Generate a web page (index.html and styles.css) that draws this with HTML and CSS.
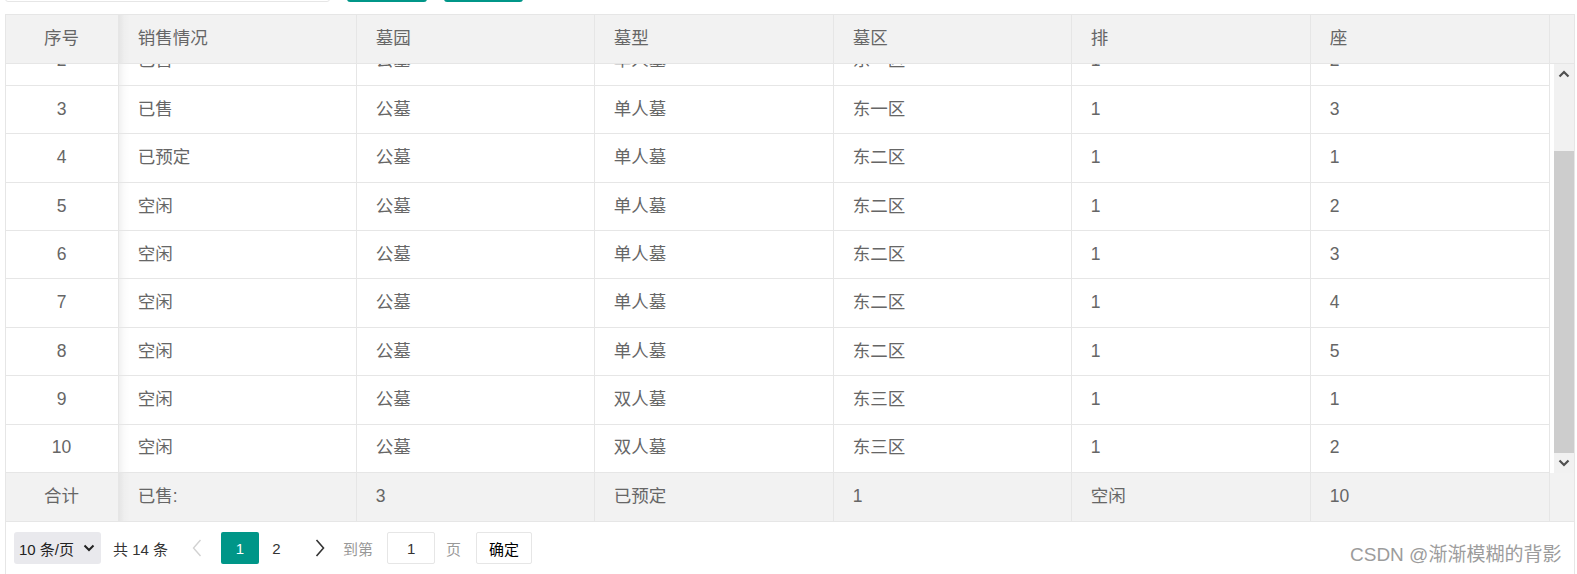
FILE: index.html
```html
<!DOCTYPE html>
<html lang="zh-CN">
<head>
<meta charset="utf-8">
<title>墓位销售</title>
<link rel="stylesheet" href="styles.css">
</head>
<body>
<div class="toolbar">
  <div class="search"></div>
  <div class="btn"></div>
  <div class="btn btn-narrow"></div>
</div>

<div class="table-view">
  <div class="row head">
    <div class="cell center">序号</div>
    <div class="cell shade">销售情况</div>
    <div class="cell">墓园</div>
    <div class="cell">墓型</div>
    <div class="cell">墓区</div>
    <div class="cell">排</div>
    <div class="cell">座</div>
    <div class="gutter"></div>
  </div>

  <div class="body">
    <div class="viewport">
      <div class="rows">
        <div class="row"><div class="cell center">2</div><div class="cell shade">已售</div><div class="cell">公墓</div><div class="cell">单人墓</div><div class="cell">东一区</div><div class="cell">1</div><div class="cell">2</div></div>
        <div class="row"><div class="cell center">3</div><div class="cell shade">已售</div><div class="cell">公墓</div><div class="cell">单人墓</div><div class="cell">东一区</div><div class="cell">1</div><div class="cell">3</div></div>
        <div class="row"><div class="cell center">4</div><div class="cell shade">已预定</div><div class="cell">公墓</div><div class="cell">单人墓</div><div class="cell">东二区</div><div class="cell">1</div><div class="cell">1</div></div>
        <div class="row"><div class="cell center">5</div><div class="cell shade">空闲</div><div class="cell">公墓</div><div class="cell">单人墓</div><div class="cell">东二区</div><div class="cell">1</div><div class="cell">2</div></div>
        <div class="row"><div class="cell center">6</div><div class="cell shade">空闲</div><div class="cell">公墓</div><div class="cell">单人墓</div><div class="cell">东二区</div><div class="cell">1</div><div class="cell">3</div></div>
        <div class="row"><div class="cell center">7</div><div class="cell shade">空闲</div><div class="cell">公墓</div><div class="cell">单人墓</div><div class="cell">东二区</div><div class="cell">1</div><div class="cell">4</div></div>
        <div class="row"><div class="cell center">8</div><div class="cell shade">空闲</div><div class="cell">公墓</div><div class="cell">单人墓</div><div class="cell">东二区</div><div class="cell">1</div><div class="cell">5</div></div>
        <div class="row"><div class="cell center">9</div><div class="cell shade">空闲</div><div class="cell">公墓</div><div class="cell">双人墓</div><div class="cell">东三区</div><div class="cell">1</div><div class="cell">1</div></div>
        <div class="row"><div class="cell center">10</div><div class="cell shade">空闲</div><div class="cell">公墓</div><div class="cell">双人墓</div><div class="cell">东三区</div><div class="cell">1</div><div class="cell">2</div></div>
      </div>
    </div>
    <div class="scrollbar">
      <div class="sb-btn">
        <svg width="12" height="8" viewBox="0 0 12 8"><polyline points="1.5,6.5 6,2 10.5,6.5" fill="none" stroke="#505050" stroke-width="2.2"/></svg>
      </div>
      <div class="sb-track"><div class="sb-thumb"></div></div>
      <div class="sb-btn">
        <svg width="12" height="8" viewBox="0 0 12 8"><polyline points="1.5,1.5 6,6 10.5,1.5" fill="none" stroke="#505050" stroke-width="2.2"/></svg>
      </div>
    </div>
  </div>

  <div class="row head foot">
    <div class="cell center">合计</div>
    <div class="cell shade">已售:</div>
    <div class="cell">3</div>
    <div class="cell">已预定</div>
    <div class="cell">1</div>
    <div class="cell">空闲</div>
    <div class="cell">10</div>
    <div class="gutter"></div>
  </div>

  <div class="pager">
    <div class="limit">10 条/页
      <svg width="12" height="8" viewBox="0 0 12 8"><polyline points="1.5,1.5 6,6 10.5,1.5" fill="none" stroke="#222" stroke-width="2"/></svg>
    </div>
    <span class="count">共 14 条</span>
    <span class="pg-arrow prev"><svg width="10" height="18" viewBox="0 0 10 18"><polyline points="8.5,1 1.5,9 8.5,17" fill="none" stroke="#d2d2d2" stroke-width="1.4"/></svg></span>
    <span class="pg-cur">1</span>
    <span class="pg-num">2</span>
    <span class="pg-arrow next"><svg width="10" height="18" viewBox="0 0 10 18"><polyline points="1.5,1 8.5,9 1.5,17" fill="none" stroke="#333" stroke-width="1.6"/></svg></span>
    <span class="pg-label">到第</span>
    <span class="pg-input">1</span>
    <span class="pg-label pg-page">页</span>
    <span class="pg-btn">确定</span>
  </div>
</div>

<div class="watermark">CSDN @渐渐模糊的背影</div>
</body>
</html>
```

FILE: styles.css
```css
html, body {
  margin: 0;
  padding: 0;
  background: #fff;
}
body {
  font-family: "Liberation Sans", Arial, "Noto Sans CJK SC", sans-serif;
  color: #666;
  position: relative;
  width: 1577px;
  height: 574px;
  overflow: hidden;
}

/* top toolbar (mostly scrolled off) */
.toolbar {
  display: flex;
  height: 14px;
  padding-left: 5px;
  gap: 17px;
  align-items: flex-start;
}
.search {
  width: 325px;
  height: 38px;
  margin-top: -36px;
  box-sizing: border-box;
  border: 1px solid #e6e6e6;
  border-radius: 3px;
  background: #fff;
}
.btn {
  width: 80px;
  height: 38px;
  margin-top: -36px;
  border-radius: 3px;
  background: #009688;
}
.btn-narrow { width: 79px; }

/* table */
.table-view {
  margin-left: 5px;
  width: 1570px;
  box-sizing: border-box;
  border: 1px solid #e6e6e6;
  border-bottom: 0;
  font-size: 17.5px;
}
.row {
  display: grid;
  grid-template-columns: 113px 238px 238px 239px 238px 239px 239px;
  height: 48.4px;
  box-sizing: border-box;
  border-bottom: 1px solid #e6e6e6;
  background: #fff;
}
.head {
  grid-template-columns: 113px 238px 238px 239px 238px 239px 239px 24px;
  height: 49px;
  background: #f2f2f2;
}
.cell {
  display: flex;
  align-items: center;
  padding-left: 18.75px;
  box-sizing: border-box;
  border-right: 1px solid #e6e6e6;
  white-space: nowrap;
  line-height: 1;
}
.cell.center {
  justify-content: center;
  padding-left: 0;
  padding-right: 1px;
}
.cell.shade {
  background-image: linear-gradient(to right, rgba(0,0,0,0.055), rgba(0,0,0,0.015) 5px, rgba(0,0,0,0) 11px);
}
.gutter {
  background: #f2f2f2;
}

.body {
  display: flex;
  height: 409px;
}
.viewport {
  width: 1544px;
  height: 409px;
  overflow: hidden;
}
.rows {
  margin-top: -26.6px;
}
.scrollbar {
  margin-left: 4px;
  width: 20px;
  height: 409px;
  background: #f1f1f1;
  display: flex;
  flex-direction: column;
}
.sb-btn {
  height: 20px;
  display: flex;
  align-items: center;
  justify-content: center;
  flex: none;
}
.sb-track {
  flex: 1;
  display: flex;
  flex-direction: column;
  justify-content: flex-end;
}
.sb-thumb {
  height: 302px;
  background: #cdcdcd;
}

.foot {
  height: 49px;
}

/* pagination */
.pager {
  display: flex;
  height: 53px;
  padding: 10px 0 0 8px;
  box-sizing: border-box;
  align-items: flex-start;
  font-size: 15px;
  color: #333;
}
.pager > * {
  height: 32px;
  display: flex;
  align-items: center;
  box-sizing: border-box;
  flex: none;
}
.limit {
  width: 87px;
  background: #e9e9ed;
  border-radius: 3px;
  padding-left: 5px;
  color: #222;
  gap: 9px;
}
.count {
  margin-left: 12px;
}
.pg-arrow {
  width: 32px;
  justify-content: center;
}
.prev { margin-left: 13px; }
.pg-cur {
  margin-left: 8px;
  width: 38px;
  justify-content: center;
  background: #009688;
  color: #fff;
  border-radius: 2px;
}
.pg-num {
  width: 35px;
  justify-content: center;
}
.next {
  margin-left: 6px;
  width: 40px;
}
.pg-label {
  margin-left: 3px;
  color: #999;
}
.pg-input {
  margin-left: 14px;
  width: 48px;
  justify-content: center;
  border: 1px solid #e6e6e6;
  border-radius: 2px;
  background: #fff;
}
.pg-page {
  margin-left: 11px;
}
.pg-btn {
  margin-left: 15px;
  width: 56px;
  justify-content: center;
  border: 1px solid #e6e6e6;
  border-radius: 2px;
  color: #000;
}

.watermark {
  position: absolute;
  left: 1350px;
  top: 545px;
  font-size: 19px;
  line-height: 1;
  color: #9c9c9c;
  white-space: nowrap;
}
```
